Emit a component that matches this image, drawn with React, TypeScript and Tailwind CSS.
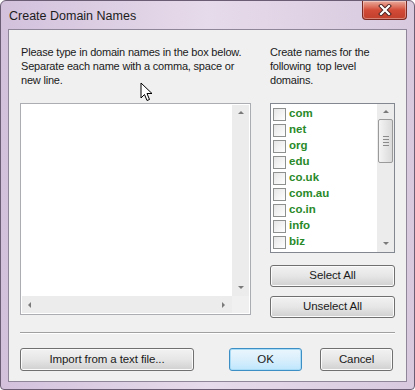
import React from "react"

const tlds = ["com", "net", "org", "edu", "co.uk", "com.au", "co.in", "info", "biz"]

function Arrow({ dir }: { dir: "up" | "down" | "left" | "right" }) {
  const pts: Record<string, string> = {
    up: "1,5 4,2 7,5",
    down: "1,2 4,5 7,2",
    left: "5,1 2,4 5,7",
    right: "2,1 5,4 2,7",
  }
  return (
    <svg width="8" height="8" viewBox="0 0 8 8">
      <polygon points={pts[dir]} fill="#7a7a7a" />
    </svg>
  )
}

function WinButton({ label, className = "", primary = false }: { label: string; className?: string; primary?: boolean }) {
  return (
    <button
      className={`h-[22px] rounded-[3px] border text-[11.5px] tracking-[-0.1px] text-[#1a1a1a] bg-gradient-to-b ${
        primary
          ? "border-[#3c8fc4] from-[#eaf6fd] via-[#d9effc] to-[#bee6fd] shadow-[inset_0_0_0_1px_#a8dcf6]"
          : "border-[#707070] from-[#f2f2f2] via-[#e6e6e6] to-[#d0d0d0] shadow-[inset_0_0_0_1px_#fbfbfb]"
      } ${className}`}
    >
      {label}
    </button>
  )
}

export default function App() {
  return (
    <div
      className="relative w-[415px] h-[390px] overflow-hidden rounded-t-[6px] rounded-b-[4px] border border-[#6b5e74] bg-gradient-to-r from-[#d3c1dc] via-[#e6dbea] to-[#d8c9df] px-[7px] pb-[7px] pt-[28px]"
      style={{ fontFamily: '"Liberation Sans", Arial, sans-serif' }}
    >
      {/* TITLE */}
      <div className="absolute left-[8px] top-[6px] text-[12.5px] text-[#1c1c1c]">Create Domain Names</div>

      {/* CLOSE */}
      <div className="absolute right-[7px] top-0 flex h-[19px] w-[45px] items-center justify-center rounded-b-[4px] border border-t-0 border-[#7a2a22] bg-gradient-to-b from-[#e9a99c] via-[#d24b37] to-[#c1402c] shadow-[inset_0_0_0_1px_rgba(255,255,255,0.35)]">
        <svg width="14" height="12" viewBox="0 0 14 12">
          <path d="M3 2 L11 10 M11 2 L3 10" stroke="#4a2020" strokeWidth="4" strokeLinecap="square" />
          <path d="M3 2 L11 10 M11 2 L3 10" stroke="#ffffff" strokeWidth="2.2" strokeLinecap="square" />
        </svg>
      </div>

      {/* CLIENT */}
      <div className="flex h-full flex-col border border-[#8f8799] bg-[#f0f0f0] px-[11px] pt-[15px]">
        <div className="flex gap-[19px]">
          {/* LEFT */}
          <div className="flex w-[231px] flex-col">
            <p className="h-[58px] whitespace-nowrap pl-[1px] text-[11px] leading-[14px] tracking-[-0.2px] text-[#1a1a1a]">
              Please type in domain names in the box below.
              <br />
              Separate each name with a comma, space or
              <br />
              new line.
            </p>
            <div className="flex h-[212px] flex-col border border-[#abadb3] bg-white p-[1px]">
              <div className="flex flex-1">
                <div className="flex-1 bg-white" />
                <div className="flex w-[17px] flex-col items-center justify-between bg-[#ececec] py-[4px]">
                  <Arrow dir="up" />
                  <Arrow dir="down" />
                </div>
              </div>
              <div className="flex h-[17px]">
                <div className="flex flex-1 items-center justify-between bg-[#ececec] px-[4px]">
                  <Arrow dir="left" />
                  <Arrow dir="right" />
                </div>
                <div className="w-[17px] bg-[#f0f0f0]" />
              </div>
            </div>
          </div>

          {/* RIGHT */}
          <div className="flex w-[125px] flex-col">
            <p className="h-[58px] whitespace-nowrap text-[11px] leading-[14px] tracking-[-0.2px] text-[#1a1a1a]">
              Create names for the
              <br />
              following&nbsp; top level
              <br />
              domains.
            </p>
            <div className="flex h-[150px] overflow-hidden border border-[#828790] bg-white">
              <div className="flex flex-1 flex-col pl-[2px] pt-[2px]">
                {tlds.map((t) => (
                  <div key={t} className="flex h-[16px] shrink-0 items-center gap-[3px]">
                    <div className="h-[13px] w-[13px] border border-[#8e8f8f] bg-gradient-to-br from-[#e6e6e6] to-[#ffffff]" />
                    <span className="text-[11.5px] font-bold text-[#2a8a2a]">{t}</span>
                  </div>
                ))}
                <div className="mt-[2px] h-[13px] w-[13px] shrink-0 border border-[#8e8f8f] bg-white" />
              </div>
              <div className="flex w-[17px] flex-col items-center bg-[#ececec] py-[4px]">
                <Arrow dir="up" />
                <div className="mt-[3px] flex h-[44px] w-[15px] flex-col items-center justify-center gap-[2px] rounded-[2px] border border-[#9a9a9a] bg-gradient-to-r from-[#f4f4f4] to-[#dadada]">
                  <div className="h-px w-[6px] bg-[#8a8a8a]" />
                  <div className="h-px w-[6px] bg-[#8a8a8a]" />
                  <div className="h-px w-[6px] bg-[#8a8a8a]" />
                  <div className="h-px w-[6px] bg-[#8a8a8a]" />
                </div>
                <div className="flex-1" />
                <Arrow dir="down" />
              </div>
            </div>
            <WinButton label="Select All" className="mt-[12px] h-[21px] w-full" />
            <WinButton label="Unselect All" className="mt-[9px] h-[21px] w-full" />
          </div>
        </div>

        {/* SEPARATOR */}
        <div className="mt-[14px] h-[2px] border-t border-b border-t-[#a0a0a0] border-b-[#ffffff]" />

        {/* BOTTOM BUTTONS */}
        <div className="mt-[14px] flex">
          <WinButton label="Import from a text file..." className="w-[174px] h-[23px]" />
          <WinButton label="OK" primary className="ml-[35px] w-[73px] h-[23px]" />
          <WinButton label="Cancel" className="ml-[18px] w-[73px] h-[23px]" />
        </div>
      </div>

      {/* MOUSE CURSOR */}
      <svg className="absolute left-[139px] top-[81px]" width="14" height="21" viewBox="0 0 14 21">
        <path d="M1 1 L1 16 L4.5 12.5 L7 18.5 L9.5 17.5 L7 11.5 L12 11.5 Z" fill="#ffffff" stroke="#000000" strokeWidth="1" strokeLinejoin="round" />
      </svg>
    </div>
  )
}
